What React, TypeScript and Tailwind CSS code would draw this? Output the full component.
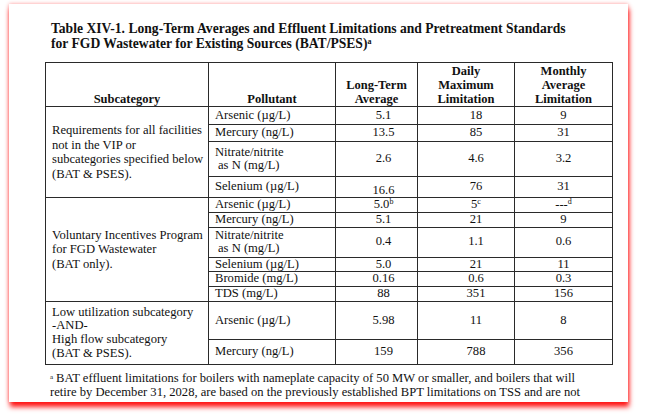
import React from 'react'

type Row = {
  pollutant: React.ReactNode
  lta: React.ReactNode
  daily: React.ReactNode
  monthly: React.ReactNode
  h: string
  ltaAlign?: string
}

type Group = {
  label: React.ReactNode
  labelLeading: string
  rows: Row[]
}

const nitrate = (
  <>
    Nitrate/nitrite
    <br />
    <span className="pl-[3px]">as N (mg/L)</span>
  </>
)

const groups: Group[] = [
  {
    label: (
      <>
        Requirements for all facilities
        <br />
        not in the VIP or
        <br />
        subcategories specified below
        <br />
        (BAT &amp; PSES).
      </>
    ),
    labelLeading: 'leading-[14.5px]',
    rows: [
      { pollutant: 'Arsenic (µg/L)', lta: '5.1', daily: '18', monthly: '9', h: 'h-[18px]' },
      { pollutant: 'Mercury (ng/L)', lta: '13.5', daily: '85', monthly: '31', h: 'h-[17px]' },
      { pollutant: nitrate, lta: '2.6', daily: '4.6', monthly: '3.2', h: 'h-[35px]' },
      { pollutant: 'Selenium (µg/L)', lta: '16.6', daily: '76', monthly: '31', h: 'h-[21px]', ltaAlign: 'align-bottom' },
    ],
  },
  {
    label: (
      <>
        Voluntary Incentives Program
        <br />
        for FGD Wastewater
        <br />
        (BAT only).
      </>
    ),
    labelLeading: 'leading-[14.5px]',
    rows: [
      {
        pollutant: 'Arsenic (µg/L)',
        lta: (
          <>
            5.0<sup className="text-[8px]">b</sup>
          </>
        ),
        daily: (
          <>
            5<sup className="text-[8px]">c</sup>
          </>
        ),
        monthly: (
          <>
            ---<sup className="text-[8px]">d</sup>
          </>
        ),
        h: 'h-[14px]',
      },
      { pollutant: 'Mercury (ng/L)', lta: '5.1', daily: '21', monthly: '9', h: 'h-[15px]' },
      { pollutant: nitrate, lta: '0.4', daily: '1.1', monthly: '0.6', h: 'h-[30px]' },
      { pollutant: 'Selenium (µg/L)', lta: '5.0', daily: '21', monthly: '11', h: 'h-[14px]' },
      { pollutant: 'Bromide (mg/L)', lta: '0.16', daily: '0.6', monthly: '0.3', h: 'h-[15px]' },
      { pollutant: 'TDS (mg/L)', lta: '88', daily: '351', monthly: '156', h: 'h-[15px]' },
    ],
  },
  {
    label: (
      <>
        Low utilization subcategory
        <br />
        -AND-
        <br />
        High flow subcategory
        <br />
        (BAT &amp; PSES).
      </>
    ),
    labelLeading: 'leading-[13.7px]',
    rows: [
      { pollutant: 'Arsenic (µg/L)', lta: '5.98', daily: '11', monthly: '8', h: 'h-[38px]' },
      { pollutant: 'Mercury (ng/L)', lta: '159', daily: '788', monthly: '356', h: 'h-[25px]' },
    ],
  },
]

const cell = 'border border-[#2a2a2a] p-0 whitespace-nowrap'

export default function App() {
  return (
    <div className="h-[420px] w-[645px] overflow-hidden bg-white pt-[4px] pl-[9px] font-['Liberation_Serif',serif] text-[#111]">
      <div className="h-[398px] w-[619px] overflow-hidden bg-white pt-[18px] pl-[32px] shadow-[1px_5px_5px_rgba(255,0,0,0.9),0_0_4px_rgba(255,0,0,0.4)]">
        <h1 className="ml-[10px] text-[13.6px] leading-[14.5px] font-bold whitespace-nowrap">
          Table XIV-1. Long-Term Averages and Effluent Limitations and Pretreatment Standards
          <br />
          for FGD Wastewater for Existing Sources (BAT/PSES)
          <sup className="text-[8px]">a</sup>
        </h1>

        <table className="mt-[11px] ml-[4px] w-[568px] table-fixed border-collapse text-[12.6px]">
          <colgroup>
            <col className="w-[163px]" />
            <col className="w-[127px]" />
            <col className="w-[82px]" />
            <col className="w-[97px]" />
            <col className="w-[98px]" />
          </colgroup>
          <thead>
            <tr className="h-[44px] text-[12.5px] font-bold leading-[14px]">
              <th className={`${cell} text-center align-bottom`}>Subcategory</th>
              <th className={`${cell} text-center align-bottom`}>Pollutant</th>
              <th className={`${cell} text-center align-bottom`}>
                Long-Term
                <br />
                Average
              </th>
              <th className={`${cell} text-center align-bottom`}>
                Daily
                <br />
                Maximum
                <br />
                Limitation
              </th>
              <th className={`${cell} text-center align-bottom`}>
                Monthly
                <br />
                Average
                <br />
                Limitation
              </th>
            </tr>
          </thead>
          <tbody>
            {groups.map((g, gi) =>
              g.rows.map((r, ri) => (
                <tr key={`${gi}-${ri}`} className={`${r.h} leading-[13.5px]`}>
                  {ri === 0 && (
                    <td rowSpan={g.rows.length} className={`${cell} px-[6px] align-middle ${g.labelLeading}`}>
                      {g.label}
                    </td>
                  )}
                  <td className={`${cell} pl-[6px] align-middle`}>{r.pollutant}</td>
                  <td className={`${cell} pl-[14px] text-center ${r.ltaAlign ?? 'align-middle'}`}>{r.lta}</td>
                  <td className={`${cell} pl-[20px] text-center align-middle`}>{r.daily}</td>
                  <td className={`${cell} text-center align-middle`}>{r.monthly}</td>
                </tr>
              ))
            )}
          </tbody>
        </table>

        <p className="mt-[6px] ml-[9px] text-[12.6px] leading-[14px] whitespace-nowrap">
          <sup className="text-[7px]">a</sup>
          <span className="pl-[3px]">
            BAT effluent limitations for boilers with nameplate capacity of 50 MW or smaller, and boilers that will
          </span>
          <br />
          retire by December 31, 2028, are based on the previously established BPT limitations on TSS and are not
        </p>
      </div>
    </div>
  )
}
